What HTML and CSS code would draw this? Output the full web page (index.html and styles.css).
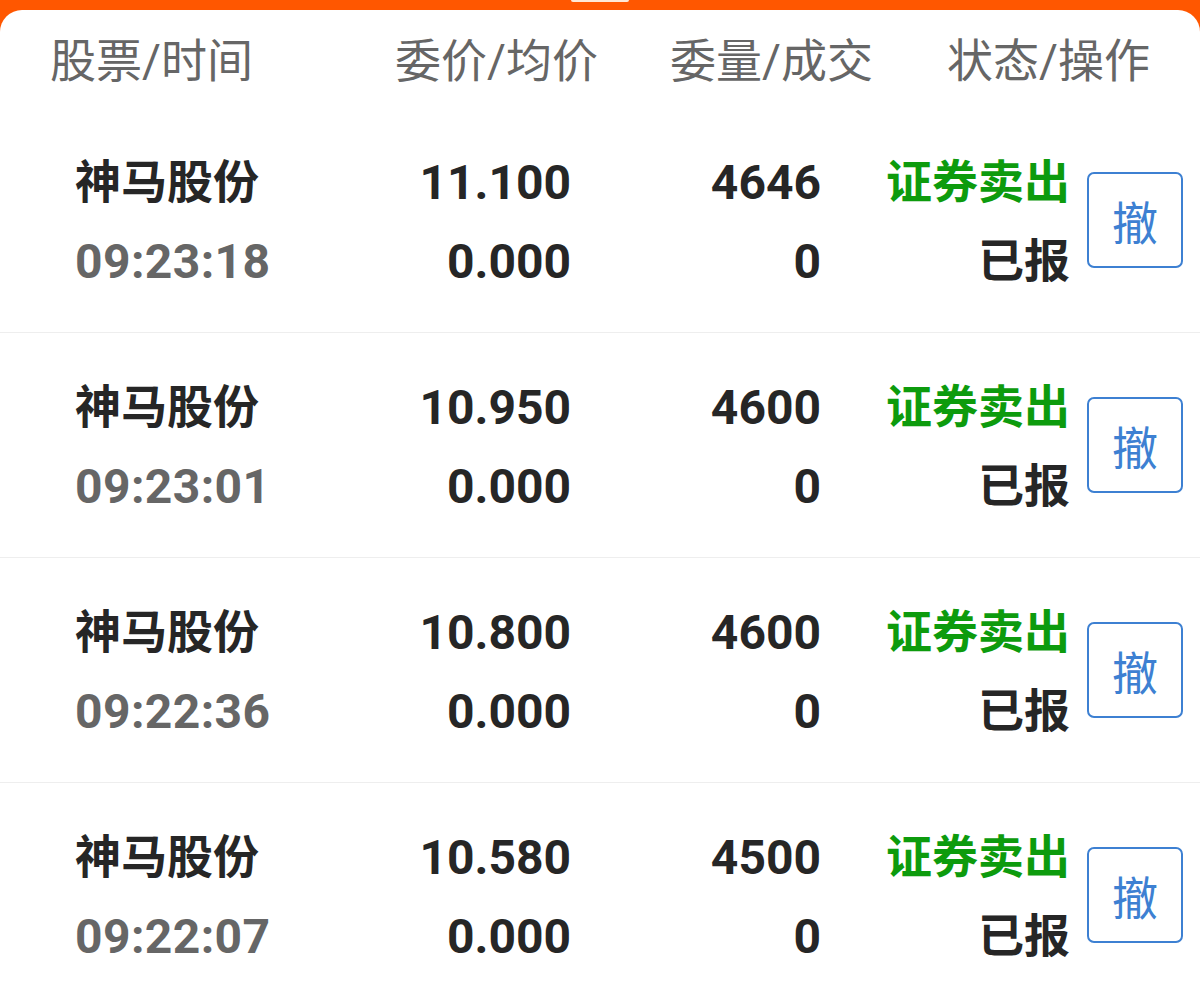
FILE: index.html
```
<!DOCTYPE html>
<html lang="zh-CN">
<head>
    <meta charset="UTF-8">
    <title>委托撤单</title>
    <link rel="stylesheet" href="styles.css">
</head>
<body>
    <div class="topbar"><div class="notch"></div></div>
    <div class="card">
        <div class="head">
            <span>股票/时间</span>
            <span>委价/均价</span>
            <span>委量/成交</span>
            <span>状态/操作</span>
        </div>

        <div class="row">
            <div class="cell name"><b class="cn">神马股份</b><span class="time">09:23:18</span></div>
            <div class="cell num"><b>11.100</b><b>0.000</b></div>
            <div class="cell num"><b>4646</b><b>0</b></div>
            <div class="cell num"><b class="cn sell">证券卖出</b><b class="cn">已报</b></div>
            <button class="cancel">撤</button>
        </div>
        <div class="row">
            <div class="cell name"><b class="cn">神马股份</b><span class="time">09:23:01</span></div>
            <div class="cell num"><b>10.950</b><b>0.000</b></div>
            <div class="cell num"><b>4600</b><b>0</b></div>
            <div class="cell num"><b class="cn sell">证券卖出</b><b class="cn">已报</b></div>
            <button class="cancel">撤</button>
        </div>
        <div class="row">
            <div class="cell name"><b class="cn">神马股份</b><span class="time">09:22:36</span></div>
            <div class="cell num"><b>10.800</b><b>0.000</b></div>
            <div class="cell num"><b>4600</b><b>0</b></div>
            <div class="cell num"><b class="cn sell">证券卖出</b><b class="cn">已报</b></div>
            <button class="cancel">撤</button>
        </div>
        <div class="row">
            <div class="cell name"><b class="cn">神马股份</b><span class="time">09:22:07</span></div>
            <div class="cell num"><b>10.580</b><b>0.000</b></div>
            <div class="cell num"><b>4500</b><b>0</b></div>
            <div class="cell num"><b class="cn sell">证券卖出</b><b class="cn">已报</b></div>
            <button class="cancel">撤</button>
        </div>
    </div>
</body>
</html>
```
FILE: styles.css
```
body {
    margin: 0;
    background: #ff5700;
    font-family: Roboto, "Noto Sans CJK SC", sans-serif;
    color: #262626;
}

.topbar {
    height: 10px;
    display: flex;
    justify-content: center;
}

.notch {
    width: 58px;
    height: 2px;
    background: #ffe9d6;
    border-radius: 0 0 2px 2px;
}

.card {
    background: #fff;
    border-radius: 22px 22px 0 0;
    min-height: 994px;
}

.head {
    display: grid;
    grid-template-columns: 273px 275px 275px 277px;
    padding: 0 50px 0;
    height: 98px;
    align-items: center;
    font-size: 46px;
    line-height: 88px;
    color: #666;
    text-align: right;
}

.head span {
    padding-top: 4px;
}

.head span:first-child {
    text-align: left;
}

.row {
    display: grid;
    grid-template-columns: 272px 224px 250px 249px 96px;
    padding: 0 17px 0 75px;
    height: 224px;
    border-bottom: 1px solid #eee;
    align-items: center;
}

.cell {
    display: flex;
    flex-direction: column;
    font-size: 48px;
    line-height: 79px;
    padding-top: 4px;
}

.cell b {
    font-weight: 700;
}

.cell .cn {
    font-size: 46px;
}

.num {
    text-align: right;
}

.time {
    color: #666;
    font-weight: 700;
    letter-spacing: 0.4px;
}

.sell {
    color: #0d9b0d;
}

.cancel {
    grid-column: 5;
    width: 96px;
    height: 96px;
    margin-left: 17px;
    padding: 0;
    background: #fff;
    border: 2.5px solid #3d80d2;
    border-radius: 7px;
    color: #3d80d2;
    font-family: "Noto Sans CJK SC", sans-serif;
    font-size: 46px;
}
```
